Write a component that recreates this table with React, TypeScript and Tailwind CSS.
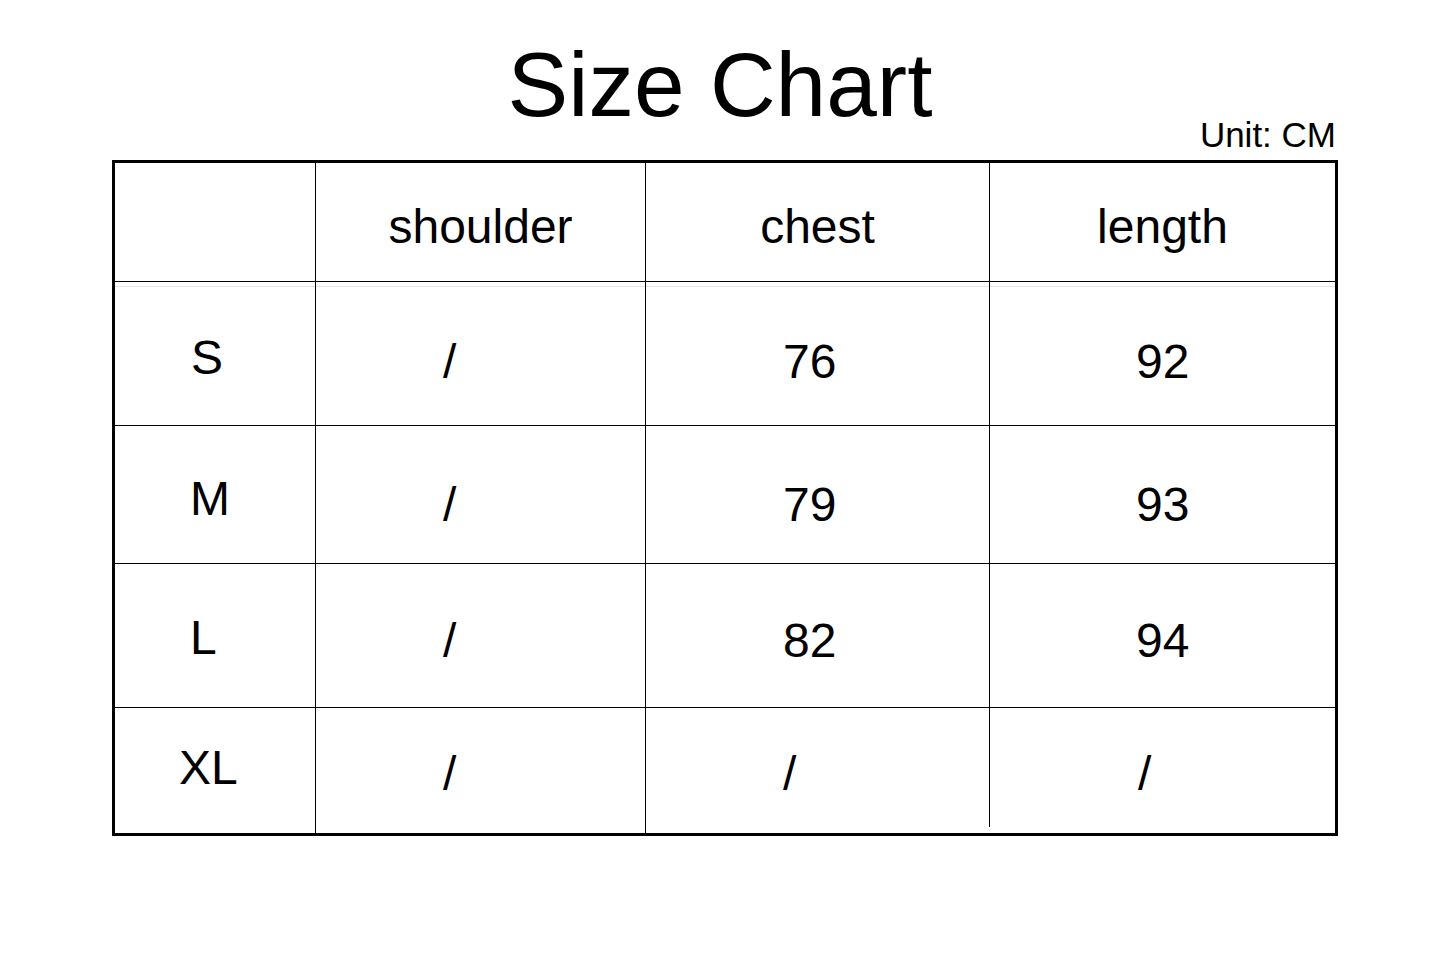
const font = { fontFamily: '"Liberation Sans", Arial, sans-serif' };

type Row = {
  size: string;
  sizeCls: string;
  dataPt: string;
  h: string;
  vals: [string, string, string];
  lenPl: string;
  last?: boolean;
};

const rows: Row[] = [
  { size: "S", sizeCls: "pt-[52px] pl-[76px]", dataPt: "pt-[56px]", h: "h-[144px] border-b", vals: ["/", "76", "92"], lenPl: "pl-[146px]" },
  { size: "M", sizeCls: "pt-[49px] pl-[75px]", dataPt: "pt-[55px]", h: "h-[138px] border-b", vals: ["/", "79", "93"], lenPl: "pl-[146px]" },
  { size: "L", sizeCls: "pt-[50px] pl-[75px]", dataPt: "pt-[53px]", h: "h-[144px] border-b", vals: ["/", "82", "94"], lenPl: "pl-[146px]" },
  { size: "XL", sizeCls: "pt-[36px] pl-[64px]", dataPt: "pt-[42px]", h: "h-[125px]", vals: ["/", "/", "/"], lenPl: "pl-[148px]", last: true },
];

const App = () => {
  return (
    <div className="w-[1440px] min-h-[968px] bg-white text-black" style={font}>
      <div className="pt-[39px]">
        <h1 className="text-center text-[91px] leading-none font-normal">Size Chart</h1>
      </div>
      <div className="-mt-[13px] flex justify-end pr-[104px]">
        <span className="text-[35px] leading-none">Unit: CM</span>
      </div>

      <div className="mt-[8px] ml-[112px] w-[1226px] border-[3px] border-black text-[48px] leading-none">
        {/* header */}
        <div className="grid h-[119px] grid-cols-[201px_330px_344px_345px] border-b border-black">
          <div className="border-r border-black" />
          <div className="border-r border-black pt-[40px] text-center">shoulder</div>
          <div className="border-r border-black pt-[40px] text-center">chest</div>
          <div className="pt-[40px] text-center">length</div>
        </div>

        {rows.map((r, i) => (
          <div
            key={r.size}
            className={`grid grid-cols-[201px_330px_344px_345px] border-black ${r.h} ${
              i === 0
                ? "bg-[linear-gradient(to_bottom,transparent_4px,#e4e4e4_4px,#e4e4e4_5px,transparent_5px)]"
                : ""
            }`}
          >
            <div className={`border-r border-black ${r.sizeCls}`}>{r.size}</div>
            <div className={`border-r border-black pl-[127px] ${r.dataPt}`}>{r.vals[0]}</div>
            {r.last ? (
              <div className="h-[119px] border-r border-black pl-[137px] pt-[42px]">{r.vals[1]}</div>
            ) : (
              <div className={`border-r border-black pl-[137px] ${r.dataPt}`}>{r.vals[1]}</div>
            )}
            <div className={`${r.lenPl} ${r.dataPt}`}>{r.vals[2]}</div>
          </div>
        ))}
      </div>
    </div>
  );
};

export default App;
